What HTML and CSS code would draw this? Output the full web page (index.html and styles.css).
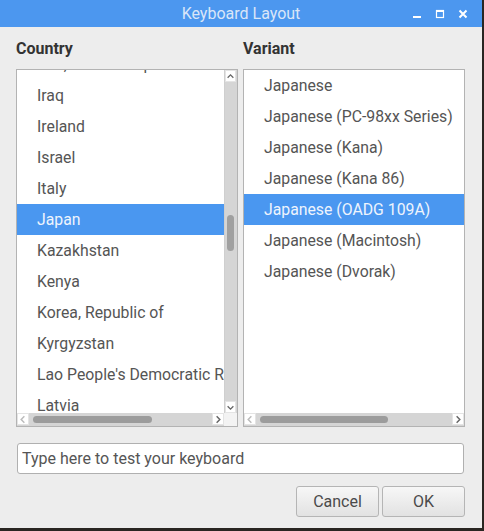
FILE: index.html
```html
<!DOCTYPE html>
<html>
<head>
<meta charset="utf-8">
<link rel="stylesheet" href="styles.css">
</head>
<body>
<div class="window">
  <div class="titlebar">
    <div></div>
    <div class="title">Keyboard Layout</div>
    <div class="controls">
      <svg width="10" height="10" viewBox="0 0 10 10"><rect x="1" y="7" width="8" height="2" fill="#fff"/></svg>
      <svg width="10" height="10" viewBox="0 0 10 10"><rect x="1.5" y="1.5" width="7" height="7" fill="none" stroke="#fff" stroke-width="1.2"/><rect x="1" y="1" width="8" height="2" fill="#fff"/></svg>
      <svg width="10" height="10" viewBox="0 0 10 10"><path d="M1.5 1.5 L8.5 8.5 M8.5 1.5 L1.5 8.5" stroke="#fff" stroke-width="2"/></svg>
    </div>
  </div>
  <div class="content">
    <div class="columns">
      <div class="col">
        <div class="label">Country</div>
        <div class="listbox">
          <div class="main">
            <div class="viewport">
              <ul class="rows scrolled">
                <li>Iran, Islamic Republic of</li>
                <li>Iraq</li>
                <li>Ireland</li>
                <li>Israel</li>
                <li>Italy</li>
                <li class="sel">Japan</li>
                <li>Kazakhstan</li>
                <li>Kenya</li>
                <li>Korea, Republic of</li>
                <li>Kyrgyzstan</li>
                <li>Lao People's Democratic Republic</li>
                <li>Latvia</li>
              </ul>
            </div>
            <div class="vscroll">
              <div class="arrow"><svg width="11" height="11" viewBox="0 0 11 11"><path d="M2 7 L5.5 3.5 L9 7" fill="none" stroke="#666" stroke-width="1.6"/></svg></div>
              <div class="vtrack"><div class="vthumb"></div></div>
              <div class="arrow"><svg width="11" height="11" viewBox="0 0 11 11"><path d="M2 4 L5.5 7.5 L9 4" fill="none" stroke="#666" stroke-width="1.6"/></svg></div>
            </div>
          </div>
          <div class="hscroll">
            <div class="harrow"><svg width="11" height="11" viewBox="0 0 11 11"><path d="M7 2 L3.5 5.5 L7 9" fill="none" stroke="#bbb" stroke-width="1.6"/></svg></div>
            <div class="htrack"><div class="hthumb left"></div></div>
            <div class="harrow"><svg width="11" height="11" viewBox="0 0 11 11"><path d="M4 2 L7.5 5.5 L4 9" fill="none" stroke="#666" stroke-width="1.6"/></svg></div>
            <div class="corner"></div>
          </div>
        </div>
      </div>
      <div class="col">
        <div class="label">Variant</div>
        <div class="listbox">
          <div class="main">
            <div class="viewport">
              <ul class="rows">
                <li>Japanese</li>
                <li>Japanese (PC-98xx Series)</li>
                <li>Japanese (Kana)</li>
                <li>Japanese (Kana 86)</li>
                <li class="sel">Japanese (OADG 109A)</li>
                <li>Japanese (Macintosh)</li>
                <li>Japanese (Dvorak)</li>
              </ul>
            </div>
          </div>
          <div class="hscroll">
            <div class="harrow"><svg width="11" height="11" viewBox="0 0 11 11"><path d="M7 2 L3.5 5.5 L7 9" fill="none" stroke="#bbb" stroke-width="1.6"/></svg></div>
            <div class="htrack"><div class="hthumb right"></div></div>
            <div class="harrow"><svg width="11" height="11" viewBox="0 0 11 11"><path d="M4 2 L7.5 5.5 L4 9" fill="none" stroke="#666" stroke-width="1.6"/></svg></div>
          </div>
        </div>
      </div>
    </div>
    <input class="test" type="text" placeholder="Type here to test your keyboard">
    <div class="buttons">
      <button class="btn">Cancel</button>
      <button class="btn">OK</button>
    </div>
  </div>
</div>
</body>
</html>
```

FILE: styles.css
```css
* { box-sizing: border-box; }
html, body { margin: 0; padding: 0; }
body {
  width: 484px;
  height: 531px;
  background: #2a2622;
  font-family: Roboto, "Liberation Sans", sans-serif;
  overflow: hidden;
}
.window {
  width: 482px;
  height: 528px;
  background: #ededed;
  display: flex;
  flex-direction: column;
}
.titlebar {
  height: 27px;
  background: #4c97ef;
  display: grid;
  grid-template-columns: 1fr auto 1fr;
  align-items: center;
}
.title {
  color: #dae6f8;
  font-size: 16px;
}
.controls {
  display: flex;
  justify-content: flex-end;
  gap: 13px;
  padding-right: 14px;
  align-items: center;
  padding-top: 1px;
}
.content {
  padding: 11px 17px 0 16px;
  display: flex;
  flex-direction: column;
}
.columns {
  display: grid;
  grid-template-columns: 222px 222px;
  gap: 5px;
}
.label {
  font-weight: bold;
  font-size: 16px;
  color: #333;
  height: 31px;
  line-height: 22px;
}
.listbox {
  height: 358px;
  border: 1px solid #b3b3b3;
  background: #fff;
  display: flex;
  flex-direction: column;
}
.main {
  flex: 1;
  display: flex;
  min-height: 0;
}
.viewport {
  flex: 1;
  overflow: hidden;
  min-width: 0;
}
.rows {
  list-style: none;
  margin: 0;
  padding: 0;
  white-space: nowrap;
}
.rows.scrolled { margin-top: -21px; }
.rows li {
  height: 31px;
  line-height: 32px;
  padding-left: 20px;
  font-size: 15.8px;
  color: #555;
}
.rows li.sel {
  background: #4a97f0;
  color: #eef4fd;
}
.vscroll {
  width: 13px;
  background: #d5d5d5;
  display: flex;
  flex-direction: column;
  border-left: 1px solid #cfcfcf;
}
.arrow {
  height: 12px;
  width: 11px;
  background: #fff;
  border: 1px solid #e4e4e4;
  display: flex;
  align-items: center;
  justify-content: center;
}
.vtrack {
  flex: 1;
  position: relative;
}
.vthumb {
  position: absolute;
  left: 2px;
  top: 133px;
  width: 7px;
  height: 36px;
  border-radius: 4px;
  background: #a0a0a0;
}
.hscroll {
  height: 13px;
  display: flex;
  background: #d5d5d5;
}
.harrow {
  width: 12px;
  height: 12px;
  background: #fff;
  border: 1px solid #e4e4e4;
  display: flex;
  align-items: center;
  justify-content: center;
}
.htrack {
  flex: 1;
  position: relative;
}
.hthumb {
  position: absolute;
  top: 3px;
  height: 7px;
  border-radius: 4px;
  background: #9c9c9c;
}
.hthumb.left { left: 4px; width: 119px; }
.hthumb.right { left: 4px; width: 128px; }
.corner {
  width: 13px;
  background: #f3f3f3;
}
.test {
  margin: 16px 0 0 1px;
  height: 31px;
  width: 447px;
  border: 1px solid #b0b0b0;
  border-radius: 3px;
  background: #fff;
  font-family: Roboto, "Liberation Sans", sans-serif;
  font-size: 16px;
  padding: 0 4px;
  color: #333;
  outline: none;
}
.test::placeholder { color: #555; }
.buttons {
  display: flex;
  justify-content: flex-end;
  gap: 3px;
  margin-top: 12px;
}
.btn {
  width: 83px;
  height: 31px;
  border: 1px solid #b5b5b5;
  border-radius: 3px;
  background: linear-gradient(#f7f7f7, #e2e2e2);
  font-family: Roboto, "Liberation Sans", sans-serif;
  font-size: 16px;
  color: #4a4a4a;
  padding: 0;
}
```
